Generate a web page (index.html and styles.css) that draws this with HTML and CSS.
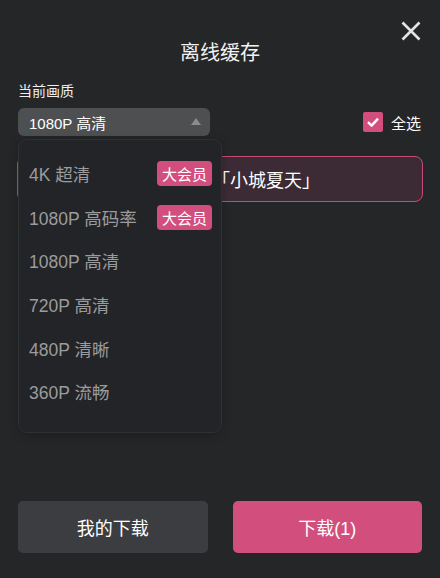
FILE: index.html
```html
<!DOCTYPE html>
<html lang="zh-CN">
<head>
<meta charset="utf-8">
<title>离线缓存</title>
<link rel="stylesheet" href="styles.css">
</head>
<body>
<div class="dialog">
  <div class="top">
    <button class="close" aria-label="关闭">
      <svg width="20" height="20" viewBox="0 0 20 20"><path d="M1.5 1.5 L18.5 18.5 M18.5 1.5 L1.5 18.5" stroke="#e4e4e4" stroke-width="2.6" stroke-linecap="butt" fill="none"/></svg>
    </button>
  </div>
  <h1 class="title">离线缓存</h1>
  <div class="label">当前画质</div>
  <div class="row">
    <div class="select-wrap">
      <div class="select">
        <span>1080P 高清</span>
        <span class="caret"></span>
      </div>
      <ul class="menu">
        <li class="item"><span>4K 超清</span><span class="badge">大会员</span></li>
        <li class="item"><span>1080P 高码率</span><span class="badge">大会员</span></li>
        <li class="item"><span>1080P 高清</span></li>
        <li class="item"><span>720P 高清</span></li>
        <li class="item"><span>480P 清晰</span></li>
        <li class="item"><span>360P 流畅</span></li>
      </ul>
    </div>
    <label class="all">
      <span class="check">
        <svg width="14" height="14" viewBox="0 0 14 14"><path d="M2 7.2 L5.6 10.6 L12 3.6" stroke="#fff" stroke-width="2.4" fill="none" stroke-linejoin="round"/></svg>
      </span>
      <span>全选</span>
    </label>
  </div>
  <div class="episode">「小城夏天」</div>
  <div class="spacer"></div>
  <div class="actions">
    <button class="btn btn-dark">我的下载</button>
    <button class="btn btn-pink">下载(1)</button>
  </div>
</div>
</body>
</html>
```
FILE: styles.css
```css
* { box-sizing: border-box; }
html, body { margin: 0; padding: 0; }
body {
  background: #252628;
  font-family: "Liberation Sans", "Noto Sans CJK SC", sans-serif;
  color: #fff;
  width: 440px;
  height: 578px;
  overflow: hidden;
}
.dialog {
  height: 578px;
  padding: 0 18px;
  display: flex;
  flex-direction: column;
}
.top {
  display: flex;
  justify-content: flex-end;
  padding-top: 21px;
  height: 42px;
}
.close {
  width: 20px;
  height: 20px;
  margin-right: 1px;
  padding: 0;
  border: 0;
  background: none;
  display: flex;
}
.title {
  margin: 0;
  font-size: 20px;
  font-weight: normal;
  line-height: 22px;
  text-align: center;
  color: #f2f2f2;
}
.label {
  margin-top: 17px;
  font-size: 14px;
  line-height: 20px;
  color: #f0f0f0;
}
.row {
  margin-top: 7px;
  display: flex;
  align-items: center;
  justify-content: space-between;
}
.select-wrap {
  position: relative;
  width: 192px;
}
.select {
  height: 28px;
  border-radius: 6px;
  background: #4e4f51;
  display: flex;
  align-items: center;
  justify-content: space-between;
  padding: 0 9px 0 11px;
  font-size: 15px;
  color: #fff;
}
.caret {
  width: 0;
  height: 0;
  border-left: 5px solid transparent;
  border-right: 5px solid transparent;
  border-bottom: 7px solid #8c8c8e;
  margin-bottom: 2px;
}
.menu {
  position: absolute;
  z-index: 2;
  top: 31px;
  left: 0;
  width: 204px;
  height: 294px;
  margin: 0;
  padding: 12px 9px 15px 10px;
  list-style: none;
  background: #232427;
  border: 1px solid #2f3033;
  border-radius: 9px;
  box-shadow: 0 2px 10px rgba(0,0,0,0.25);
}
.item {
  height: 43.6px;
  display: flex;
  align-items: center;
  justify-content: space-between;
  font-size: 17.5px;
  color: #9b9c9e;
}
.badge {
  height: 25px;
  padding: 0 5px;
  border-radius: 4px;
  background: #d24f7d;
  color: #fff;
  font-size: 15px;
  display: flex;
  align-items: center;
}
.all {
  display: flex;
  align-items: center;
  gap: 8px;
  font-size: 15px;
  color: #fff;
  margin-right: 1px;
}
.check {
  width: 20px;
  height: 20px;
  border-radius: 2px;
  background: #d24f7d;
  display: flex;
  align-items: center;
  justify-content: center;
}
.episode {
  margin-top: 20px;
  margin-left: -1px;
  margin-right: -1px;
  height: 46px;
  border: 1px solid #c84a78;
  border-radius: 8px;
  background: #3c2b35;
  display: flex;
  align-items: center;
  padding-left: 194px;
  font-size: 18px;
  color: #fff;
}
.spacer { flex: 1; }
.actions {
  display: flex;
  gap: 25px;
  margin-bottom: 25px;
}
.btn {
  flex: 1;
  height: 52px;
  border: 0;
  border-radius: 5px;
  font-family: inherit;
  font-size: 18px;
  color: #fff;
}
.btn-dark { background: #3c3d40; }
.btn-pink { background: #d24f7d; }
```
